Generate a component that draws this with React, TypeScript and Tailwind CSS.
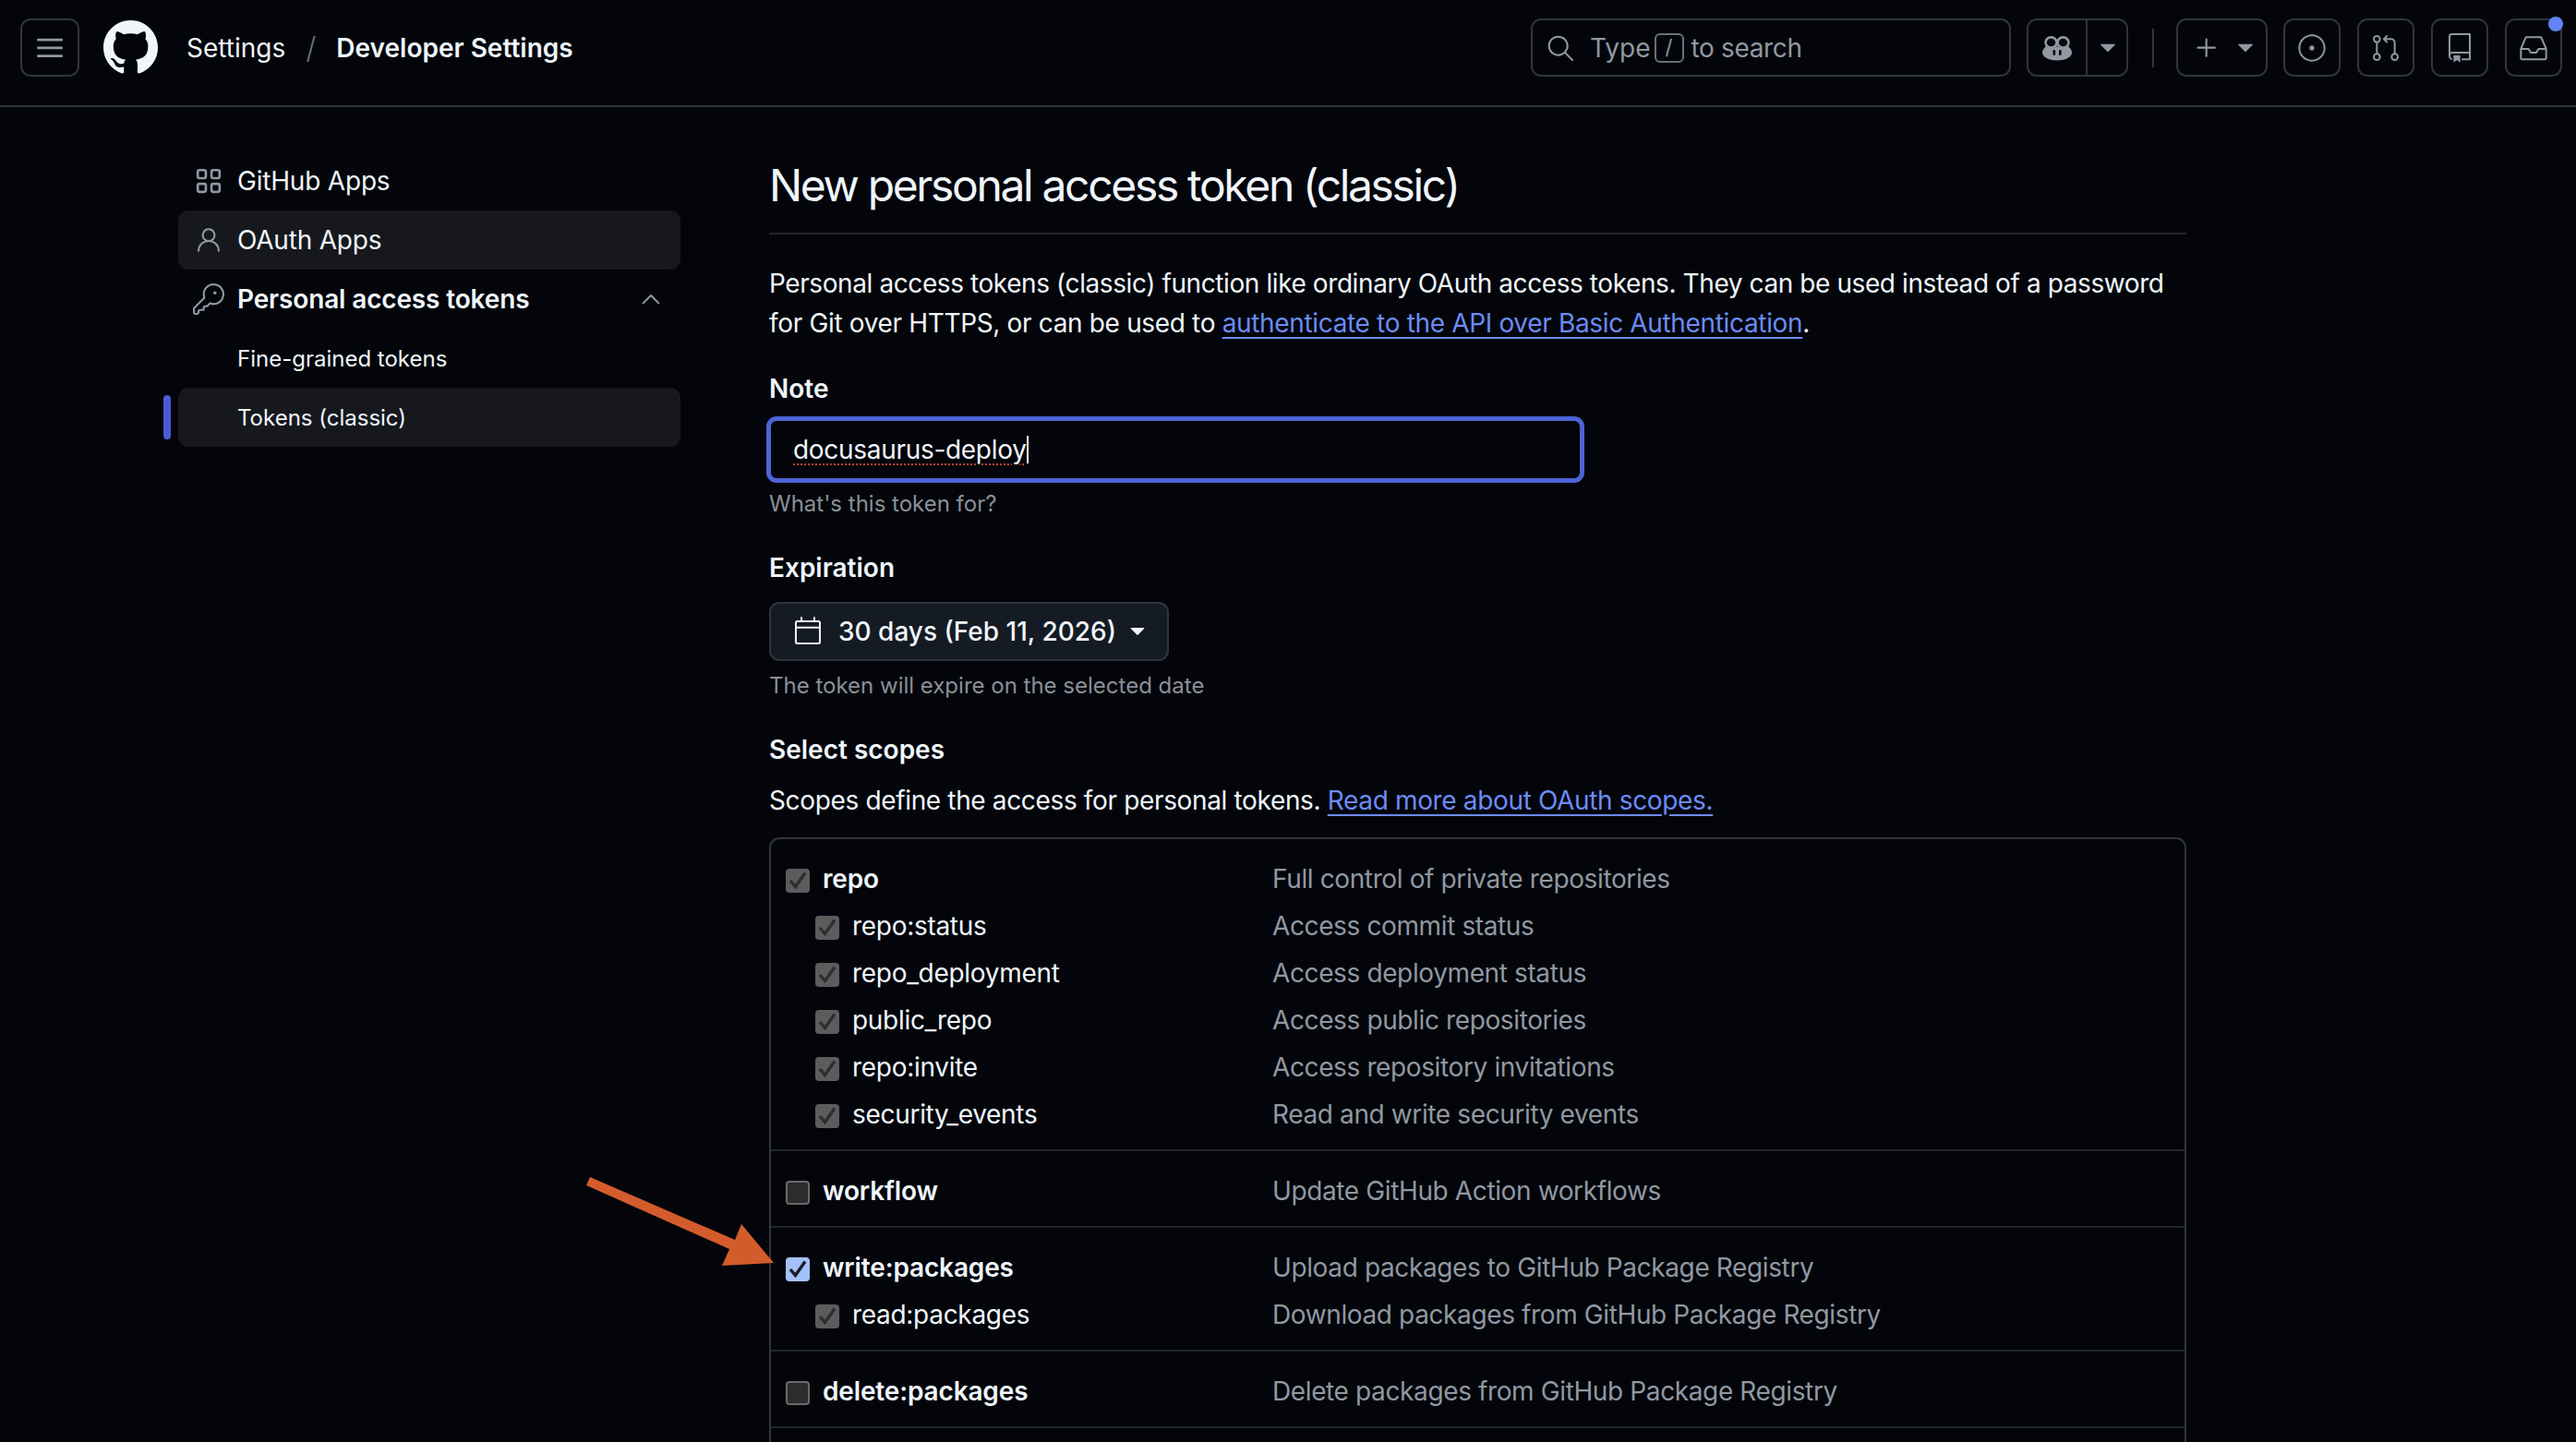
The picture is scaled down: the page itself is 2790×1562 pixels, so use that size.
import React from 'react';
import {
  GoCalendar,
  GoChevronUp,
  GoGitPullRequest,
  GoInbox,
  GoIssueOpened,
  GoKey,
  GoPerson,
  GoPlus,
  GoRepo,
  GoSearch,
  GoTriangleDown,
} from 'react-icons/go';

const iconBtn =
  'flex h-[63px] w-[62px] items-center justify-center rounded-[11px] border-2 border-[#30343c] text-[#9198a1]';

const GithubMark: React.FC<{ size: number; className?: string }> = ({ size, className }) => (
  <svg width={size} height={size} viewBox="0 0 16 16" fill="currentColor" className={className}>
    <path d="M8 0c4.42 0 8 3.58 8 8a8.013 8.013 0 0 1-5.45 7.59c-.4.08-.55-.17-.55-.38 0-.27.01-1.13.01-2.2 0-.75-.25-1.23-.54-1.48 1.78-.2 3.65-.88 3.65-3.95 0-.88-.31-1.59-.82-2.15.08-.2.36-1.02-.08-2.12 0 0-.67-.22-2.2.82-.64-.18-1.32-.27-2-.27-.68 0-1.36.09-2 .27-1.53-1.03-2.2-.82-2.2-.82-.44 1.1-.16 1.92-.08 2.12-.51.56-.82 1.28-.82 2.15 0 3.06 1.86 3.75 3.64 3.95-.23.2-.44.55-.51 1.07-.46.21-1.61.55-2.33-.66-.15-.24-.6-.83-1.23-.82-.67.01-.27.38.01.53.34.19.73.9.82 1.13.16.45.68 1.31 2.69.94 0 .67.01 1.3.01 1.49 0 .21-.15.45-.55.38A7.995 7.995 0 0 1 0 8c0-4.42 3.58-8 8-8Z" />
  </svg>
);

const Hamburger: React.FC = () => (
  <svg width="28" height="28" viewBox="0 0 16 16" fill="currentColor">
    <rect x="0" y="2.2" width="16" height="1.5" rx="0.75" />
    <rect x="0" y="7.2" width="16" height="1.5" rx="0.75" />
    <rect x="0" y="12.2" width="16" height="1.5" rx="0.75" />
  </svg>
);

const AppsIcon: React.FC<{ className?: string }> = ({ className }) => (
  <svg width="28" height="28" viewBox="0 0 16 16" fill="none" stroke="currentColor" strokeWidth="1.5" className={className}>
    <rect x="1.25" y="1.25" width="5" height="5" rx="1" />
    <rect x="9.75" y="1.25" width="5" height="5" rx="1" />
    <rect x="1.25" y="9.75" width="5" height="5" rx="1" />
    <rect x="9.75" y="9.75" width="5" height="5" rx="1" />
  </svg>
);

// goggles on top of a solid face, the octicon in the package is outline only
const CopilotIcon: React.FC = () => (
  <svg width="32" height="28" viewBox="0 0 32 28">
    <ellipse cx="9.5" cy="8" rx="6" ry="5.6" fill="none" stroke="currentColor" strokeWidth="2.6" />
    <ellipse cx="22.5" cy="8" rx="6" ry="5.6" fill="none" stroke="currentColor" strokeWidth="2.6" />
    <path
      d="M4 12 C1 15 0 17 0 19 C0 24 8 27.5 16 27.5 C24 27.5 32 24 32 19 C32 17 31 15 28 12 C25 15 19 15 16 12 C13 15 7 15 4 12 Z"
      fill="currentColor"
    />
    <rect x="11.5" y="16" width="2.6" height="6" rx="1.3" fill="#03050b" />
    <rect x="18" y="16" width="2.6" height="6" rx="1.3" fill="#03050b" />
  </svg>
);

const Header: React.FC = () => (
  <header className="flex h-[116px] items-center border-b-2 border-[#30343c] pb-[11px] pl-[22px] pr-[15px]">
    <div className={`${iconBtn} !w-[64px]`}>
      <Hamburger />
    </div>
    <GithubMark size={59} className="ml-[26px] text-[#f0f6fc]" />
    <span className="ml-[31px] text-[28px] text-[#f0f6fc]">Settings</span>
    <span className="ml-[22px] text-[32px] font-light text-[#6b7078]">/</span>
    <span className="ml-[22px] text-[28px] font-semibold text-[#f0f6fc]">Developer Settings</span>

    <div className="ml-auto flex h-[63px] w-[520px] items-center rounded-[11px] border-2 border-[#30343c] pl-[14px] text-[28px] text-[#9198a1]">
      <GoSearch size={32} />
      <span className="ml-[16px]">Type</span>
      <span className="ml-[4px] mr-[8px] flex h-[32px] w-[32px] items-center justify-center rounded-[6px] border-2 border-[#6b7078] text-[22px]">/</span>
      <span className="tracking-[-0.35px]">to search</span>
    </div>

    <div className="ml-[17px] flex h-[63px] w-[110px] items-center rounded-[11px] border-2 border-[#30343c] text-[#9198a1]">
      <div className="flex h-full w-[64px] items-center justify-center border-r-2 border-[#30343c]">
        <CopilotIcon />
      </div>
      <GoTriangleDown size={30} className="ml-[7px]" />
    </div>

    <div className="ml-[26px] h-[42px] w-[2px] bg-[#30343c]" />

    <div className="ml-[24px] flex h-[63px] w-[99px] items-center rounded-[11px] border-2 border-[#30343c] pl-[14px] text-[#9198a1]">
      <GoPlus size={34} />
      <GoTriangleDown size={30} className="ml-[10px]" />
    </div>
    <div className={`${iconBtn} ml-[17px]`}>
      <GoIssueOpened size={32} />
    </div>
    <div className={`${iconBtn} ml-[18px]`}>
      <GoGitPullRequest size={32} />
    </div>
    <div className={`${iconBtn} ml-[18px]`}>
      <GoRepo size={32} />
    </div>
    <div className={`${iconBtn} relative ml-[18px]`}>
      <GoInbox size={32} />
      <span className="absolute -right-[3px] -top-[4px] h-[16px] w-[16px] rounded-full bg-[#6383f2]" />
    </div>
  </header>
);

const Sidebar: React.FC = () => (
  <aside className="ml-[193px] w-[544px] shrink-0 pt-[48px] text-[#f0f6fc]">
    <div className="flex h-[64px] items-center text-[28px] tracking-[-0.2px]">
      <AppsIcon className="ml-[19px] mr-[17px] text-[#9198a1]" />
      <span>GitHub Apps</span>
    </div>
    <div className="flex h-[64px] items-center rounded-[11px] bg-[#16181e] text-[28px] tracking-[-0.2px]">
      <GoPerson size={32} className="ml-[17px] mr-[15px] text-[#9198a1]" />
      <span>OAuth Apps</span>
    </div>
    <div className="flex h-[64px] items-center text-[28px] font-semibold tracking-[-0.15px]">
      <GoKey size={34} className="ml-[16px] mr-[14px] text-[#9198a1]" />
      <span>Personal access tokens</span>
      <GoChevronUp size={32} className="ml-auto mr-[16px] text-[#9198a1]" />
    </div>
    <div className="flex h-[64px] items-center pl-[64px] pt-[1px] text-[24px]">Fine-grained tokens</div>
    <div className="relative flex h-[64px] items-center rounded-[11px] bg-[#16181e] pl-[64px] pt-[1px] text-[24px]">
      Tokens (classic)
      <span className="absolute -left-[16px] top-[8px] h-[48px] w-[8px] rounded-full bg-[#4b5bd5]" />
    </div>
  </aside>
);

const Checkbox: React.FC<{ state: 'off' | 'muted' | 'on' }> = ({ state }) => {
  const tone =
    state === 'on'
      ? 'bg-[#a4c1fb]'
      : state === 'muted'
        ? 'bg-[#5c5c5c]'
        : 'border-2 border-[#6a6a6a] bg-[#2c2c2c]';
  return (
    <span className={`mt-[4px] block h-[26px] w-[26px] shrink-0 rounded-[4px] ${tone}`}>
      {state !== 'off' && (
        <svg width="26" height="26" viewBox="0 0 26 26" fill="none">
          <path
            d="M5 13 L10.5 19.5 L21 4.5"
            stroke={state === 'on' ? '#1a1d24' : '#2e2e2e'}
            strokeWidth="3.4"
          />
        </svg>
      )}
    </span>
  );
};

type Scope = { name: string; desc: string; state: 'off' | 'muted' | 'on'; child?: boolean };

const scopeGroups: Scope[][] = [
  [
    { name: 'repo', desc: 'Full control of private repositories', state: 'muted' },
    { name: 'repo:status', desc: 'Access commit status', state: 'muted', child: true },
    { name: 'repo_deployment', desc: 'Access deployment status', state: 'muted', child: true },
    { name: 'public_repo', desc: 'Access public repositories', state: 'muted', child: true },
    { name: 'repo:invite', desc: 'Access repository invitations', state: 'muted', child: true },
    { name: 'security_events', desc: 'Read and write security events', state: 'muted', child: true },
  ],
  [{ name: 'workflow', desc: 'Update GitHub Action workflows', state: 'off' }],
  [
    { name: 'write:packages', desc: 'Upload packages to GitHub Package Registry', state: 'on' },
    { name: 'read:packages', desc: 'Download packages from GitHub Package Registry', state: 'muted', child: true },
  ],
  [{ name: 'delete:packages', desc: 'Delete packages from GitHub Package Registry', state: 'off' }],
];

const ScopeRow: React.FC<{ scope: Scope }> = ({ scope }) => (
  <div className="flex h-[51px] items-center">
    <div className={`flex w-[527px] items-center gap-[14px] ${scope.child ? 'pl-[32px]' : ''}`}>
      <Checkbox state={scope.state} />
      <span className={`text-[#f0f6fc] ${scope.child ? 'font-normal tracking-[-0.3px]' : 'font-semibold tracking-[-0.15px]'}`}>
        {scope.name}
      </span>
    </div>
    <span className="tracking-[-0.38px] text-[#9198a1]">{scope.desc}</span>
  </div>
);

const Main: React.FC = () => (
  <main className="ml-[96px] w-[1535px] shrink-0 text-[28px] text-[#f0f6fc]">
    <h1 className="mt-[60px] border-b-2 border-[#22252b] pb-[26px] text-[48px] leading-[50px] tracking-[-2.35px]">
      New personal access token (classic)
    </h1>
    <p className="mt-[32px] leading-[43px] tracking-[-0.34px]">
      <span className="tracking-[-0.41px]">
        Personal access tokens (classic) function like ordinary OAuth access tokens. They can be used instead of a password
      </span>
      <br />
      for Git over HTTPS, or can be used to{' '}
      <span className="text-[#6c8cf5] underline underline-offset-[5px]">
        authenticate to the API over Basic Authentication
      </span>
      .
    </p>

    <div className="mt-[31px] font-semibold leading-[36px]">Note</div>
    <div className="-ml-[3px] mt-[12px] flex h-[72px] w-[886px] items-center rounded-[11px] border-[5px] border-[#4f63d8] pl-[24px] tracking-[-0.3px]">
      <span className="underline decoration-[#b5452a] decoration-dotted decoration-2 underline-offset-[5px]">
        docusaurus-deploy
      </span>
      <span className="h-[30px] w-[2px] bg-white" />
    </div>
    <div className="mt-[8px] text-[24px] leading-[30px] text-[#8b9097]">What's this token for?</div>

    <div className="mt-[36px] font-semibold leading-[36px]">Expiration</div>
    <div className="mt-[19px] flex h-[64px] w-[433px] items-center rounded-[11px] border-2 border-[#2f353d] bg-[#151b23] pl-[24px] font-medium">
      <GoCalendar size={32} />
      <span className="ml-[17px]">30 days (Feb 11, 2026)</span>
      <GoTriangleDown size={28} className="ml-[9px]" />
    </div>
    <div className="mt-[12px] text-[24px] leading-[30px] text-[#8b9097]">The token will expire on the selected date</div>

    <div className="mt-[36px] font-semibold leading-[36px]">Select scopes</div>
    <div className="mt-[19px] leading-[36px] tracking-[-0.35px]">
      Scopes define the access for personal tokens.{' '}
      <span className="text-[#6c8cf5] underline underline-offset-[5px]">Read more about OAuth scopes.</span>
    </div>

    <div className="mt-[22px] rounded-t-[11px] border-2 border-[#30343c] px-[16px]">
      {scopeGroups.map((group, i) => (
        <div key={i} className="-mx-[16px] border-b-2 border-[#23262d] px-[16px] pb-[13px] pt-[17px]">
          {group.map((scope) => (
            <ScopeRow key={scope.name} scope={scope} />
          ))}
        </div>
      ))}
      <div className="h-[120px]" />
    </div>
  </main>
);

export default function App() {
  return (
    <div className="relative h-[1562px] w-[2790px] overflow-hidden bg-[#03050b] font-[Inter,sans-serif] antialiased">
      <Header />
      <div className="flex">
        <Sidebar />
        <Main />
      </div>
      {/* annotation arrow laid over the screenshot */}
      <svg className="absolute left-[630px] top-[1270px]" width="215" height="110" viewBox="630 1270 215 110">
        <polygon
          points="639,1275 796,1343 803,1326 838,1368 782,1371 790,1353 635,1284"
          fill="#d45c2c"
        />
      </svg>
    </div>
  );
}
